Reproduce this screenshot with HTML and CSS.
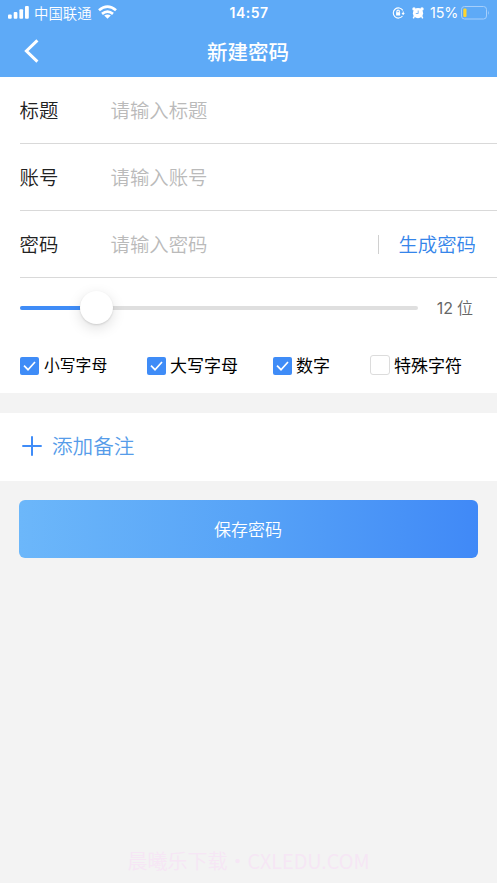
FILE: index.html
```
<!DOCTYPE html>
<html lang="zh-CN">
<head>
<meta charset="utf-8">
<meta name="viewport" content="width=device-width, initial-scale=1">
<title>新建密码</title>
<link rel="stylesheet" href="styles.css">
</head>
<body>
<header class="header">
  <div class="status">
    <div class="status-left">
      <svg class="signal" width="21" height="13" viewBox="0 0 21 13" fill="#fff"><rect x="0" y="8.5" width="3.7" height="4.2" rx="1"/><rect x="5.7" y="6" width="3.7" height="6.7" rx="1"/><rect x="11.4" y="3.2" width="3.7" height="9.5" rx="1"/><rect x="17" y="0" width="3.8" height="12.7" rx="1"/></svg>
      <span class="carrier">中国联通</span>
      <svg class="wifi" width="19" height="14" viewBox="0 0 19 14" fill="none" stroke="#fff" stroke-width="2.7"><path d="M1 5.3Q9.5-2.1 18 5.3M4 8.9q5.5-4.6 11 0"/><path d="M9.5 13.7 6.2 10.6q3.3-2.2 6.6 0z" fill="#fff" stroke="none"/></svg>
    </div>
    <time class="clock">14:57</time>
    <div class="status-right">
      <svg width="13" height="12" viewBox="0 0 13 12" fill="none" stroke="#fff" stroke-width="1.1"><path d="M10.8 3.4A5.1 5.1 0 1 0 10.5 9M11.2 4.5v2.2"/><path d="M9.5 6.1h3.3l-1.7 2.1z" fill="#fff" stroke="none"/><rect x="4.1" y="5.2" width="4" height="3.3" fill="#fff" stroke="none"/><path d="M4.9 5.5V4.3a1.2 1.2 0 0 1 2.4 0v1.2"/></svg>
      <svg class="alarm" width="12" height="12" viewBox="0 0 12 12" fill="#fff"><circle cx="6" cy="6.2" r="5.1"/><circle cx="2" cy="2" r="1.7"/><circle cx="10" cy="2" r="1.7"/><path d="m2.4 9.2-1.1 2.1M9.6 9.2l1.1 2.1" stroke="#fff" stroke-width="1.5"/><path d="M6.2 3.5v3H3.8" fill="none" stroke="#5eaaf7" stroke-width=".8"/></svg>
      <span class="percent">15%</span>
      <svg class="battery" width="29" height="14" viewBox="0 0 29 14"><rect x=".5" y=".5" width="25" height="12.5" rx="3" fill="none" stroke="#a6cffb"/><rect x="2.3" y="2.4" width="3.2" height="8.7" rx="1" fill="#ffd52e"/><path d="M27.2 4.5q1.5 2.2 0 4.5z" fill="#a6cffb"/></svg>
    </div>
  </div>
  <div class="navbar">
    <svg class="back" width="15" height="24" viewBox="0 0 15 24" fill="none" stroke="#fff" stroke-width="3"><path d="M13.4 1.3 2.4 12l11 10.7"/></svg>
    <h1 class="title">新建密码</h1>
  </div>
</header>
<main>
  <section class="form">
    <div class="field"><span class="label">标题</span><span class="placeholder">请输入标题</span></div>
    <div class="field"><span class="label">账号</span><span class="placeholder">请输入账号</span></div>
    <div class="field"><span class="label">密码</span><span class="placeholder">请输入密码</span><span class="divider"></span><span class="generate">生成密码</span></div>
    <div class="length">
      <div class="track"><div class="filled"></div><div class="thumb"></div></div>
      <span class="count">12<span class="unit">位</span></span>
    </div>
    <div class="options">
      <div class="option small"><span class="box checked"><svg width="13" height="10" viewBox="0 0 13 10"><path d="m1 4.7 4 4L12 1"/></svg></span>小写字母</div>
      <div class="option"><span class="box checked"><svg width="13" height="10" viewBox="0 0 13 10"><path d="m1 4.7 4 4L12 1"/></svg></span>大写字母</div>
      <div class="option"><span class="box checked"><svg width="13" height="10" viewBox="0 0 13 10"><path d="m1 4.7 4 4L12 1"/></svg></span>数字</div>
      <div class="option"><span class="box"></span>特殊字符</div>
    </div>
  </section>
  <section class="note">
    <svg width="20" height="20" viewBox="0 0 20 20" stroke="#3f8cf8" stroke-width="2"><path d="M.3 10h19.4M10 .3v19.4"/></svg>
    <span class="note-text">添加备注</span>
  </section>
  <div class="save">保存密码</div>
</main>
<footer class="footer">晨曦乐下载・CXLEDU.COM</footer>
</body>
</html>
```
FILE: styles.css
```
* { box-sizing: border-box; }
body {
  margin: 0;
  height: 883px;
  display: flex;
  flex-direction: column;
  overflow: hidden;
  background: #f3f3f3;
  font-family: "Noto Sans CJK SC", sans-serif;
  font-weight: 350;
  white-space: nowrap;
}
svg { display: block; flex: none; }
.header { height: 77px; background: #5eaaf7; color: #fff; }
.status {
  height: 26px;
  display: grid;
  grid-template-columns: 1fr auto 1fr;
  align-items: center;
  padding: 0 7px 0 8px;
}
.status-left, .status-right { display: flex; align-items: center; height: 26px; }
.status-left { height: 25px; margin-bottom: 1px; }
.status-right { justify-content: flex-end; }
.carrier { font-size: 14.4px; line-height: 25px; margin-left: 5px; }
.wifi { margin-left: 6px; margin-top: -1px; }
.clock { font: 600 14px/26px Inter, sans-serif; letter-spacing: .45px; }
.alarm { margin-left: 7px; }
.percent { font: 400 14.3px/26px Inter, sans-serif; margin-left: 6px; letter-spacing: -.2px; }
.battery { margin-left: 3px; }
.navbar {
  height: 49px;
  display: grid;
  grid-template-columns: 1fr auto 1fr;
  align-items: center;
  padding: 0 25px 0 24px;
}
.title { margin: 0; font-size: 20.5px; font-weight: 500; line-height: 48px; }
.form { height: 316px; background: #fff; }
.field {
  height: 67px;
  margin-left: 19.5px;
  padding: 0 21px 1px 0;
  display: flex;
  align-items: center;
  border-bottom: 1px solid #d9d9d9;
  font-size: 19.4px;
  line-height: 28px;
}
.label { width: 91px; color: #222; }
.placeholder { color: #bababa; }
.divider { width: 1px; height: 19px; margin: 1px 19.5px 0 auto; background: #d0d0d0; }
.generate { color: #3585ea; }
.length {
  height: 59px;
  padding: 0 24px 0 19.5px;
  display: flex;
  align-items: center;
  justify-content: space-between;
}
.track {
  width: 398px;
  height: 4px;
  border-radius: 2px;
  display: flex;
  align-items: center;
  background: #dfdfdf;
}
.filled { width: 60.5px; height: 4px; border-radius: 2px 0 0 2px; background: #3f8cf7; }
.thumb {
  width: 33px;
  height: 33px;
  margin-top: -1px;
  border-radius: 50%;
  background: #fff;
  box-shadow: 0 4px 14px rgba(0,0,0,.13), 0 1px 2px rgba(0,0,0,.12);
}
.count { color: #666; font: 400 16px/24px Inter, sans-serif; margin-top: -1px; }
.unit { font-family: "Noto Sans CJK SC", sans-serif; font-weight: 350; margin-left: 4px; }
.options {
  height: 55px;
  padding-left: 20px;
  display: grid;
  grid-template-columns: 127px 126px 97px 1fr;
  align-items: center;
}
.option { display: flex; align-items: center; gap: 4px; font-size: 17px; line-height: 24px; font-weight: 400; color: #000; }
.small { font-size: 15.8px; gap: 5px; }
.box {
  width: 20px;
  height: 20px;
  border: 1.5px solid #dcdcdc;
  border-radius: 3px;
}
.checked {
  width: 19px;
  height: 18px;
  margin-top: 2px;
  border: 0;
  border-radius: 2px;
  background: #3f8cf7;
  display: flex;
  align-items: center;
  justify-content: center;
}
.checked path { fill: none; stroke: #fff; stroke-width: 1.7; }
.note {
  height: 68px;
  margin-top: 20px;
  padding: 0 0 2px 22px;
  display: flex;
  align-items: center;
  gap: 10px;
  background: #fff;
}
.note-text { color: #569ce9; font-size: 20.6px; line-height: 30px; margin-top: -2px; }
.save {
  margin: 19px 19px 0;
  height: 58px;
  border-radius: 6px;
  background: linear-gradient(90deg, #6cb7fa, #57a3f7 50%, #4089f7);
  color: #fff;
  text-align: center;
  text-indent: -1px;
  font-size: 17px;
  line-height: 58px;
}
.footer {
  margin-top: auto;
  height: 45px;
  text-align: center;
  font-size: 20px;
  line-height: 45px;
  color: #f6e6f5;
}
```
